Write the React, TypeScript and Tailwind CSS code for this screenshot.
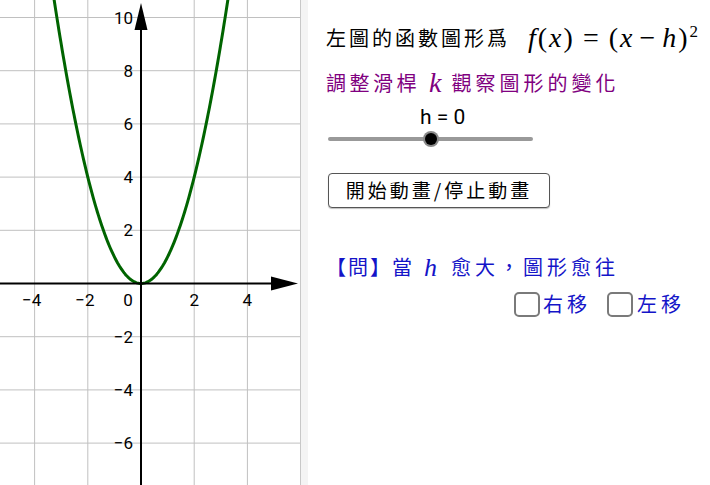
import React from 'react'

const O = { x: 141, y: 283.5 }
const U = 26.6

const px = (x: number) => O.x + x * U
const py = (y: number) => O.y - y * U

function Graph() {
  const pts: string[] = []
  for (let i = -340; i <= 340; i += 4) {
    const x = i / 100
    pts.push(`${px(x).toFixed(2)},${py(x * x).toFixed(2)}`)
  }
  const vx = [-4, -2, 2, 4]
  const hy = [10, 8, 6, 4, 2, -2, -4, -6, -8]
  return (
    <svg width={300} height={485} viewBox="0 0 300 485" className="block">
      <rect width={300} height={485} fill="#ffffff" />
      {vx.map((v) => (
        <line key={'v' + v} x1={px(v)} x2={px(v)} y1={0} y2={485} stroke="#c0c0c0" strokeWidth={1} />
      ))}
      {hy.map((v) => (
        <line key={'h' + v} x1={0} x2={300} y1={py(v)} y2={py(v)} stroke="#c0c0c0" strokeWidth={1} />
      ))}
      <polyline points={pts.join(' ')} fill="none" stroke="#006400" strokeWidth={3} strokeLinejoin="round" />
      <line x1={0} x2={272} y1={O.y} y2={O.y} stroke="#000" strokeWidth={2} />
      <polygon points={`298,${O.y} 271,${O.y - 7} 271,${O.y + 7}`} fill="#000" />
      <line x1={O.x} x2={O.x} y1={485} y2={29} stroke="#000" strokeWidth={2} />
      <polygon points={`${O.x},3 ${O.x - 6.5},30 ${O.x + 6.5},30`} fill="#000" />
      <g fontFamily="Roboto, 'Liberation Sans', sans-serif" fontSize={17} fill="#000">
        {[10, 8, 6, 4, 2].map((v) => (
          <text key={'ly' + v} x={133} y={py(v) + 6} textAnchor="end">{v}</text>
        ))}
        {[-2, -4, -6].map((v) => (
          <text key={'ly' + v} x={133} y={py(v) + 6} textAnchor="end">{'\u2212' + -v}</text>
        ))}
        {[-4, -2].map((v) => (
          <text key={'lx' + v} x={px(v) - 3} y={306} textAnchor="middle">{'\u2212' + -v}</text>
        ))}
        <text x={128} y={306} textAnchor="middle">0</text>
        {[2, 4].map((v) => (
          <text key={'lx' + v} x={px(v)} y={306} textAnchor="middle">{v}</text>
        ))}
      </g>
    </svg>
  )
}

const cjk = "font-['Noto_Sans_CJK_TC',sans-serif]"
const math = "font-['Liberation_Serif',serif] italic"

export default function App() {
  return (
    <div className="flex h-[485px] w-[710px] overflow-hidden bg-white">
      <div className="w-[300px] shrink-0">
        <Graph />
      </div>
      <div className="w-[8px] shrink-0 border-l border-[#c8c8c8] bg-[#f4f4f4]" />
      <div className="flex min-w-0 flex-1 flex-col pl-[18px] pt-[24px]">
        <div className="flex h-[28px] items-center whitespace-nowrap text-black">
          <span className={`${cjk} text-[20px] tracking-[3px]`}>左圖的函數圖形爲</span>
          <span className="ml-[18px] flex items-center font-['Liberation_Serif',serif] text-[28px] leading-[32px] tracking-[2px]">
            <span><i>f</i>(<i>x</i>)</span>
            <span className="mx-[8px]">=</span>
            <span>(<i>x</i></span>
            <span className="mx-[5px]">−</span>
            <span><i>h</i>)</span>
            <span className="mt-[1px] self-start text-[17px] leading-none tracking-normal">2</span>
          </span>
        </div>
        <div className="mt-[17px] flex h-[28px] items-center whitespace-nowrap text-[#800080]">
          <span className={`${cjk} text-[20px] tracking-[3.5px]`}>調整滑桿</span>
          <span className={`${math} ml-[9px] mr-[10px] text-[28px]`}>k</span>
          <span className={`${cjk} text-[20px] tracking-[4px]`}>觀察圖形的變化</span>
        </div>
        <div className="ml-[94px] mt-[9px] h-[22px] font-['Roboto',sans-serif] text-[21px] leading-[22px] text-black">
          h = 0
        </div>
        <div className="relative ml-[2px] mt-[3px] flex h-[16px] w-[205px] items-center">
          <div className="h-[4px] w-full rounded-full bg-[#999999]" />
          <div className="absolute left-[95px] top-0 flex h-[16px] w-[16px] items-center justify-center rounded-full bg-[#8a8a8a]">
            <div className="h-[12px] w-[12px] rounded-full bg-black" />
          </div>
        </div>
        <button
          type="button"
          className={`${cjk} ml-[2px] mt-[26px] flex h-[35px] w-[222px] items-center justify-center rounded-[4px] border border-[#555555] bg-white text-[19px] tracking-[3px] text-black shadow-[0_1px_1px_rgba(0,0,0,0.25)]`}
        >
          開始動畫/停止動畫
        </button>
        <div className="mt-[45px] flex h-[28px] items-center whitespace-nowrap text-[#1414c8]">
          <span className={`${cjk} text-[20px] tracking-[2px]`}>【問】當</span>
          <span className={`${math} ml-[10px] mr-[14px] text-[26px]`}>h</span>
          <span className={`${cjk} text-[20px] tracking-[4px]`}>愈大，圖形愈往</span>
        </div>
        <div className="ml-[188px] mt-[10px] flex h-[26px] items-center whitespace-nowrap text-[#1414c8]">
          <div className="h-[25px] w-[26px] rounded-[5px] border-2 border-[#7a7a7a] bg-white" />
          <span className={`${cjk} ml-[3px] text-[20px] tracking-[4px]`}>右移</span>
          <div className="ml-[16px] h-[25px] w-[26px] rounded-[5px] border-2 border-[#7a7a7a] bg-white" />
          <span className={`${cjk} ml-[4px] text-[20px] tracking-[4px]`}>左移</span>
        </div>
      </div>
    </div>
  )
}
